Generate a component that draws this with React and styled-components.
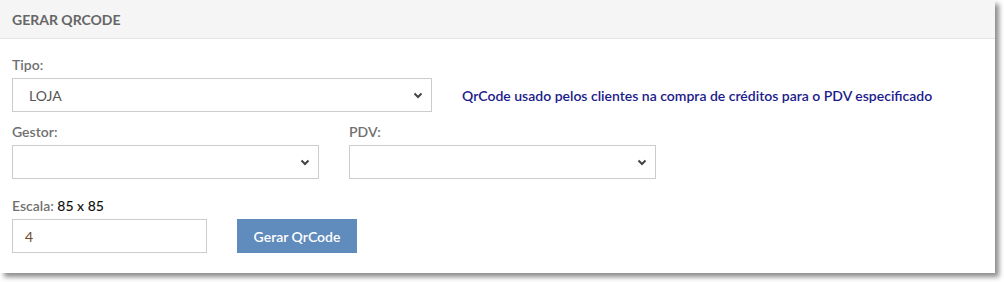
import styled, { createGlobalStyle } from "styled-components";

const Global = createGlobalStyle`
  body {
    margin: 0;
    background: #ffffff;
    font-family: Lato, "Open Sans", sans-serif;
  }
`;

const Page = styled.div`
  height: 282px;
`;

const Panel = styled.div`
  width: 995px;
  height: 273px;
  box-sizing: border-box;
  background: #ffffff;
  box-shadow: 4px 4px 5px rgba(0, 0, 0, 0.45);
`;

const Header = styled.div`
  height: 39px;
  box-sizing: border-box;
  padding: 0 12px;
  display: flex;
  align-items: center;
  background: #f5f5f5;
  border-bottom: 1px solid #e3e3e3;
  color: #666666;
  font-size: 14px;
  font-weight: 700;
`;

const Body = styled.div`
  padding: 17px 12px 0;
  display: flex;
  flex-direction: column;
`;

const Row = styled.div`
  display: flex;
  align-items: flex-end;
  gap: 30px;
  margin-bottom: ${(p) => p.mb || 0}px;
`;

const Field = styled.div`
  display: flex;
  flex-direction: column;
  width: ${(p) => p.w}px;
`;

const Label = styled.label`
  font-size: 14px;
  line-height: 18px;
  font-weight: 600;
  color: #707070;
  margin-bottom: 4px;
`;

const Value = styled.span`
  color: #111111;
  font-weight: 500;
`;

const Select = styled.div`
  height: 34px;
  box-sizing: border-box;
  border: 1px solid #cccccc;
  display: flex;
  align-items: center;
  justify-content: space-between;
  padding: 0 8px 0 16px;
  font-size: 14px;
  color: #555555;
`;

const Input = styled.div`
  height: 34px;
  box-sizing: border-box;
  border: 1px solid #cccccc;
  display: flex;
  align-items: center;
  padding: 0 12px;
  font-size: 14px;
  color: #6e4a2e;
`;

const Hint = styled.div`
  height: 34px;
  display: flex;
  align-items: center;
  font-size: 14px;
  font-weight: 600;
  color: #1b1b8a;
`;

const Button = styled.button`
  width: 120px;
  height: 34px;
  border: none;
  background: #5f8bbd;
  color: #ffffff;
  font-family: inherit;
  font-size: 14px;
  font-weight: 600;
`;

const Chevron = () => (
  <svg width="10" height="7" viewBox="0 0 10 7">
    <path d="M1.5 1.5 L5 5 L8.5 1.5" fill="none" stroke="#444" strokeWidth="2" />
  </svg>
);

export default function App() {
  return (
    <Page>
      <Global />
      <Panel>
        <Header>GERAR QRCODE</Header>
        <Body>
          <Row mb={11}>
            <Field w={420}>
              <Label>Tipo:</Label>
              <Select>
                LOJA
                <Chevron />
              </Select>
            </Field>
            <Hint>QrCode usado pelos clientes na compra de créditos para o PDV especificado</Hint>
          </Row>
          <Row mb={18}>
            <Field w={307}>
              <Label>Gestor:</Label>
              <Select>
                <span />
                <Chevron />
              </Select>
            </Field>
            <Field w={307}>
              <Label>PDV:</Label>
              <Select>
                <span />
                <Chevron />
              </Select>
            </Field>
          </Row>
          <Row>
            <Field w={195}>
              <Label>
                Escala: <Value>85 x 85</Value>
              </Label>
              <Input>4</Input>
            </Field>
            <Button>Gerar QrCode</Button>
          </Row>
        </Body>
      </Panel>
    </Page>
  );
}
